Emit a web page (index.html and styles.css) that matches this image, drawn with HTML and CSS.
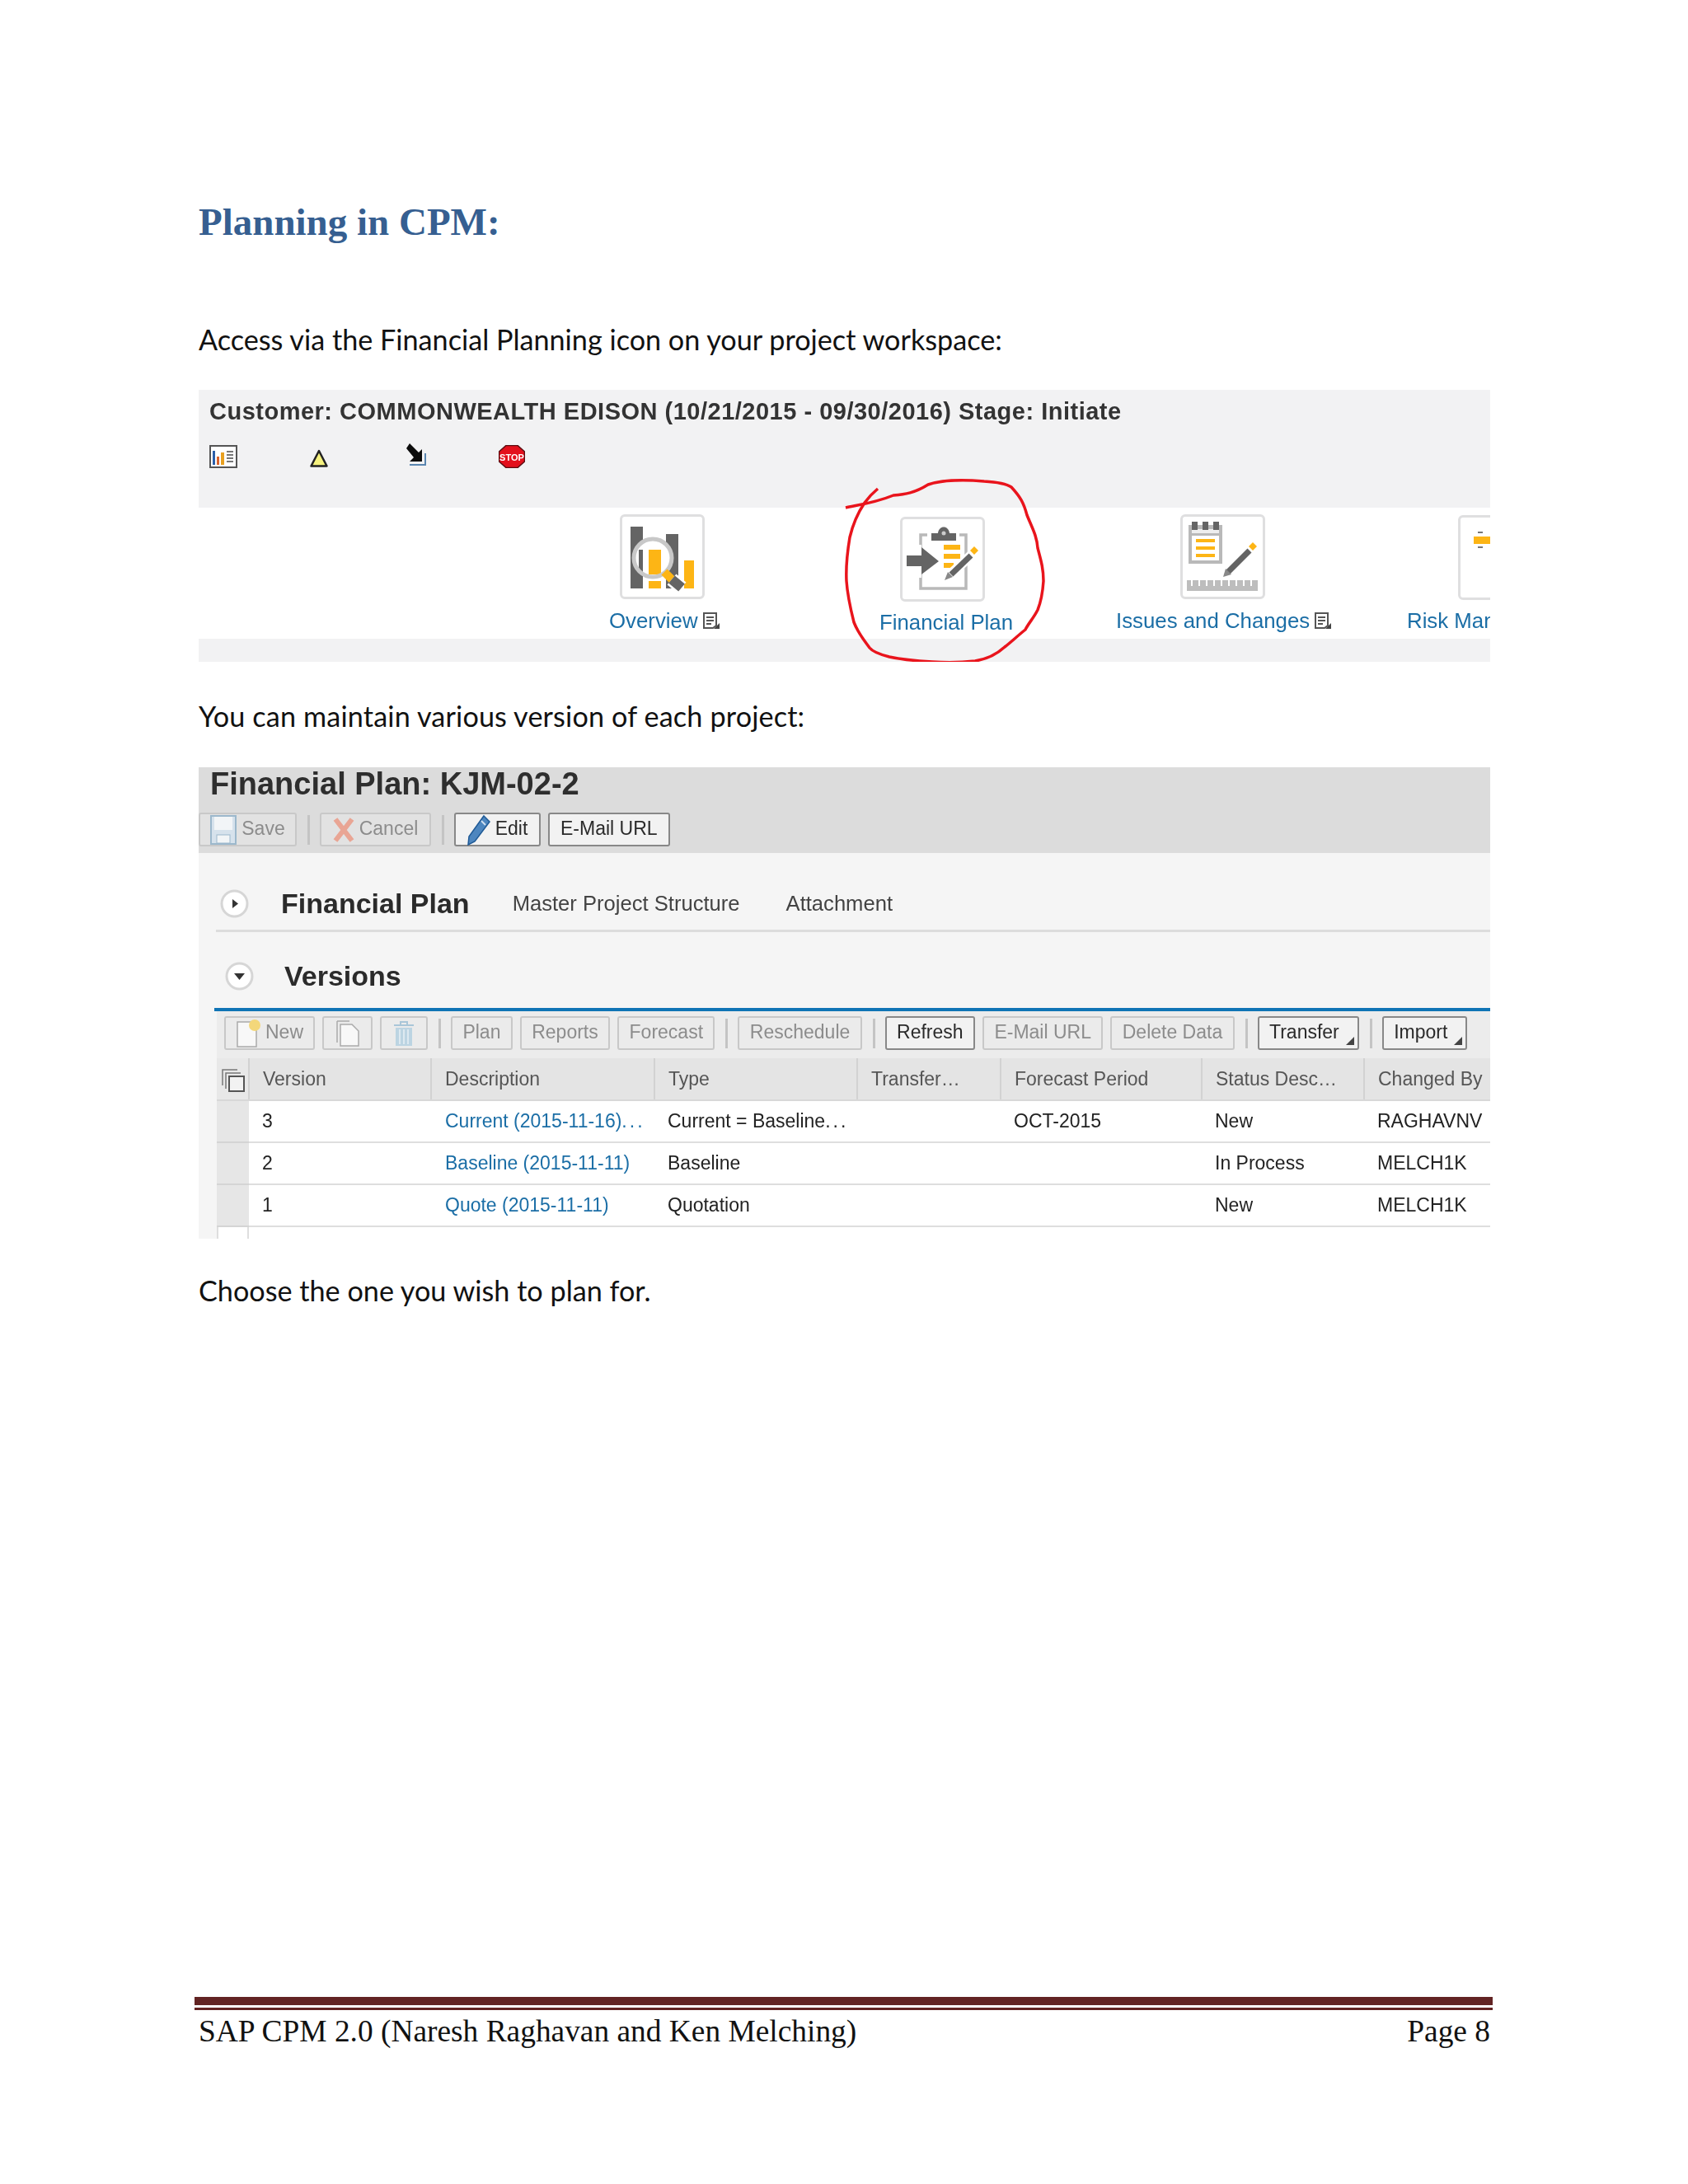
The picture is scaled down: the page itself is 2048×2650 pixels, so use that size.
FILE: index.html
```html
<!DOCTYPE html>
<html lang="en">
<head>
  <meta charset="UTF-8">
  <meta name="viewport" content="width=device-width, initial-scale=1.0">
  <title>Planning in CPM</title>
  <link rel="stylesheet" href="styles.css">
</head>
<body>
  <div class="page">
    <h1>Planning in CPM:</h1>
    <p class="access">Access via the Financial Planning icon on your project workspace:</p>

    <!-- Project workspace screenshot -->
    <div class="shot workspace">
      <div class="customer">
        <div class="customer-title">Customer: COMMONWEALTH EDISON (10/21/2015 - 09/30/2016) Stage: Initiate</div>
        <div class="status-icons">
          <svg class="status chart" width="34" height="28" viewBox="0 0 34 28">
            <rect x="1" y="1" width="32" height="26" fill="#fff" stroke="#555" stroke-width="2"/>
            <rect x="4" y="7" width="3" height="17" fill="#2b5ea8"/>
            <rect x="9" y="14" width="3" height="10" fill="#d9622b"/>
            <rect x="14" y="9" width="4" height="15" fill="#e8a020"/>
            <path d="M21 8h8M21 12h8M21 16h8M21 20h8" stroke="#777" stroke-width="2"/>
          </svg>
          <svg class="status triangle" width="22" height="22" viewBox="0 0 22 22">
            <path d="M11 2 L20.500 20.500 H1.500 Z" fill="#f6f27e" stroke="#222" stroke-width="2.500" stroke-linejoin="round"/>
          </svg>
          <svg class="status arrow" width="26" height="27" viewBox="0 0 26 27">
            <path d="M2 6 L6 0 L17 11 L21 7 L21 22 L6 22 L11 17 Z" fill="#0c0c0c"/>
            <path d="M6 26 H25 V12" fill="none" stroke="#5a86b0" stroke-width="2"/>
          </svg>
          <svg class="status stop" width="32" height="28" viewBox="0 0 32 28">
            <path d="M9 0.500 H23 L31.500 8 V20 L23 27.500 H9 L0.500 20 V8 Z" fill="#e3101c" stroke="#5a0d10" stroke-width="1.500"/>
            <text class="stop-text" x="16" y="18.500" text-anchor="middle">STOP</text>
          </svg>
        </div>
      </div>

      <div class="launchpad">
        <div class="launch launch-overview">
          <div class="tile">
            <svg width="97" height="97" viewBox="3 3 97 97">
              <rect x="13" y="15" width="15" height="75" fill="#646464"/>
              <rect x="56" y="24" width="15" height="66" fill="#646464"/>
              <rect x="35" y="43" width="15" height="47" fill="#fdb515"/>
              <rect x="78" y="56" width="12" height="34" fill="#fdb515"/>
              <circle cx="40" cy="53" r="23" fill="#fff"/>
              <rect x="23" y="43" width="5" height="30" fill="#646464"/>
              <rect x="35" y="43" width="15" height="30" fill="#fdb515"/>
              <rect x="30" y="76" width="26" height="5" fill="#fff"/>
              <circle cx="40" cy="53" r="23" fill="none" stroke="#c8c8c8" stroke-width="5"/>
              <path d="M54 70 L64 80" stroke="#fdb515" stroke-width="10"/>
              <path d="M63 79 L75 89" stroke="#fff" stroke-width="17"/>
              <path d="M63 79 L75 89" stroke="#646464" stroke-width="12"/>
            </svg>
          </div>
          <a class="launch-label">Overview<svg class="doc-icon" width="22" height="22" viewBox="0 0 22 22"><path d="M2 2 H17 V17 L13 20 H2 Z" fill="#fff" stroke="#555" stroke-width="2"/><path d="M5 7 H14 M5 11 H14 M5 15 H11" stroke="#555" stroke-width="2"/><path d="M21 14 V21 H14 Z" fill="#444"/></svg></a>
        </div>

        <div class="launch launch-plan">
          <div class="tile">
            <svg width="96" height="97" viewBox="3 3 96 97">
              <path d="M33 22 H25 V87 H80 V22 H72" fill="none" stroke="#b9b9b9" stroke-width="3.500"/>
              <path d="M38 29 V20 H46 C47 10 59 10 60 20 H68 V29 Z" fill="#646464"/>
              <circle cx="53" cy="20" r="2.500" fill="#ccc"/>
              <rect x="53" y="34" width="20" height="6" fill="#fdb515"/>
              <rect x="53" y="45" width="20" height="6" fill="#fdb515"/>
              <rect x="53" y="56" width="12" height="6" fill="#fdb515"/>
              <path d="M23 34 V74" stroke="#fff" stroke-width="6"/>
              <path d="M8 47 H26 V37 L47 54 L26 70 V60 H8 Z" fill="#646464"/>
              <path d="M60 71 L86 47" stroke="#fff" stroke-width="12"/>
              <path d="M62 70 L86 47" stroke="#646464" stroke-width="7"/>
              <path d="M54 77 L58 67 L64 73 Z" fill="#888"/>
              <path d="M90 36 L95 41 L90 46 L85 41 Z" fill="#fdb515"/>
            </svg>
          </div>
          <a class="launch-label">Financial Plan</a>
        </div>

        <div class="launch launch-issues">
          <div class="tile">
            <svg width="95" height="97" viewBox="3 3 95 97">
              <rect x="10" y="13" width="41" height="47" fill="#b9b9b9"/>
              <rect x="14" y="26" width="33" height="30" fill="#fff"/>
              <rect x="14" y="18" width="33" height="5" fill="#eee"/>
              <rect x="14" y="9" width="7" height="10" fill="#646464"/>
              <rect x="27" y="9" width="7" height="10" fill="#646464"/>
              <rect x="40" y="9" width="7" height="10" fill="#646464"/>
              <rect x="19" y="30" width="23" height="4" fill="#fdb515"/>
              <rect x="19" y="39" width="23" height="4" fill="#fdb515"/>
              <rect x="19" y="48" width="23" height="4" fill="#fdb515"/>
              <path d="M58 70 L84 44" stroke="#646464" stroke-width="7"/>
              <path d="M52 76 L55 66 L62 73 Z" fill="#888"/>
              <path d="M88 34 L93 39 L88 44 L83 39 Z" fill="#fdb515"/>
              <rect x="8" y="80" width="86" height="13" fill="#bdbdbd"/>
              <path d="M14 80 V87 M23 80 V87 M32 80 V87 M41 80 V87 M50 80 V87 M59 80 V87 M68 80 V87 M77 80 V87 M86 80 V87" stroke="#fff" stroke-width="2"/>
            </svg>
          </div>
          <a class="launch-label">Issues and Changes<svg class="doc-icon" width="22" height="22" viewBox="0 0 22 22"><path d="M2 2 H17 V17 L13 20 H2 Z" fill="#fff" stroke="#555" stroke-width="2"/><path d="M5 7 H14 M5 11 H14 M5 15 H11" stroke="#555" stroke-width="2"/><path d="M21 14 V21 H14 Z" fill="#444"/></svg></a>
        </div>

        <div class="launch launch-risk">
          <div class="tile">
            <svg width="97" height="97" viewBox="3 3 97 97">
              <rect x="19" y="26" width="60" height="9" fill="#fdb515"/>
              <path d="M24 21 H30 M24 39 H30" stroke="#777" stroke-width="2"/>
            </svg>
          </div>
          <a class="launch-label">Risk Man</a>
        </div>
      </div>
      <div class="band"></div>

      <svg class="scribble" width="300" height="240" viewBox="1000 570 300 240">
        <path d="M1026 616 C1039 613 1059 611 1084 601 C1098 600 1110 598 1126 588 C1143 582 1172 582 1194 584 C1211 585 1221 587 1227 591 C1238 603 1242 610 1246 625 C1252 640 1258 650 1259 665 C1263 680 1266 690 1266 705 C1265 720 1263 730 1259 740 C1254 750 1248 756 1244 764 C1234 772 1228 778 1219 785 C1208 795 1196 800 1183 802 C1165 804 1147 804 1131 803 C1113 802 1093 800 1079 797 C1067 794 1059 791 1055 786 C1047 775 1041 768 1036 755 C1031 735 1028 720 1027 705 C1026 685 1028 670 1031 652 C1035 635 1041 622 1049 610 C1054 603 1059 598 1065 593" fill="none" stroke="#e9141c" stroke-width="3.500"/>
      </svg>
    </div>

    <p class="maintain">You can maintain various version of each project:</p>

    <!-- Financial plan screenshot -->
    <div class="shot plan">
      <div class="plan-head">
        <div class="plan-title">Financial Plan: KJM-02-2</div>
        <div class="toolbar head-toolbar">
          <span class="btn off with-icon btn-save">
            <svg width="32" height="36" viewBox="0 0 32 36"><path d="M1 1 H31 V35 H1 Z" fill="#d6e2ec" stroke="#9cb8cc" stroke-width="2"/><rect x="5" y="2" width="22" height="16" fill="#f2f5f7"/><rect x="8" y="24" width="16" height="10" fill="#f2f5f7" stroke="#9cb8cc"/></svg>
            Save
          </span>
          <span class="sep"></span>
          <span class="btn off with-icon btn-cancel">
            <svg width="26" height="30" viewBox="0 0 26 30"><path d="M3 2 L23 28 M23 2 L3 28" stroke="#e9a594" stroke-width="6"/></svg>
            Cancel
          </span>
          <span class="sep"></span>
          <span class="btn with-icon btn-edit">
            <svg width="28" height="38" viewBox="0 0 28 38"><path d="M20 2 L27 9 L9 33 L1 37 L2 27 Z" fill="#4d86bf" stroke="#1f5a96" stroke-width="1.500"/><path d="M17 8 L22 13" stroke="#cfe0f0" stroke-width="2"/></svg>
            Edit
          </span>
          <span class="btn">E-Mail URL</span>
        </div>
      </div>

      <div class="tabs">
        <span class="toggle"><svg width="35" height="35" viewBox="0 0 35 35"><circle cx="17.500" cy="17.500" r="15.500" fill="#fff" stroke="#d6d6d6" stroke-width="3"/><path d="M15 12 L22 17.500 L15 23 Z" fill="#333"/></svg></span>
        <span class="tab-main">Financial Plan</span>
        <span class="tab tab-master">Master Project Structure</span>
        <span class="tab tab-attach">Attachment</span>
      </div>

      <div class="versions-head">
        <span class="toggle"><svg width="35" height="35" viewBox="0 0 35 35"><circle cx="17.500" cy="17.500" r="15.500" fill="#fff" stroke="#d6d6d6" stroke-width="3"/><path d="M11 14 H24 L17.500 22 Z" fill="#333"/></svg></span>
        <span class="versions-title">Versions</span>
      </div>

      <div class="versions">
        <div class="toolbar table-toolbar">
          <span class="btn off with-icon btn-new">
            <svg width="32" height="34" viewBox="0 0 32 34"><path d="M2 3 H20 L25 9 V33 H2 Z" fill="#f8f8f8" stroke="#aaa" stroke-width="1.500"/><circle cx="23" cy="7" r="7" fill="#f3d77a"/></svg>
            New
          </span>
          <span class="btn off icon-only copy-btn">
            <svg width="30" height="32" viewBox="0 0 30 32"><path d="M2 1 H17 M2 1 V27" fill="none" stroke="#aaa" stroke-width="1.500"/><path d="M6 5 H20 L28 13 V31 H6 Z" fill="#f8f8f8" stroke="#aaa" stroke-width="1.500"/></svg>
          </span>
          <span class="btn off icon-only trash-btn">
            <svg width="26" height="32" viewBox="0 0 26 32"><path d="M1 6 H25 M9 6 V2 H17 V6" fill="none" stroke="#a9c6d8" stroke-width="2"/><path d="M3 9 H23 V31 H3 Z" fill="#bcd4e2"/><path d="M8 11 V29 M13 11 V29 M18 11 V29" stroke="#e8f0f5" stroke-width="1.500"/></svg>
          </span>
          <span class="sep"></span>
          <span class="btn off">Plan</span>
          <span class="btn off">Reports</span>
          <span class="btn off">Forecast</span>
          <span class="sep"></span>
          <span class="btn off">Reschedule</span>
          <span class="sep"></span>
          <span class="btn">Refresh</span>
          <span class="btn off">E-Mail URL</span>
          <span class="btn off">Delete Data</span>
          <span class="sep"></span>
          <span class="btn menu">Transfer</span>
          <span class="sep"></span>
          <span class="btn menu">Import</span>
        </div>

        <table class="grid">
          <colgroup>
            <col class="col-sel"><col class="col-ver"><col class="col-desc"><col class="col-type"><col class="col-trans"><col class="col-period"><col class="col-status"><col class="col-by">
          </colgroup>
          <thead>
            <tr>
              <th class="sel"><svg class="select-all" width="28" height="28" viewBox="0 0 28 28"><path d="M1 20 V1 H19 M5 24 V5 H23" fill="none" stroke="#777" stroke-width="1.500"/><rect x="9" y="9" width="18" height="18" fill="#f2f2f2" stroke="#555" stroke-width="2"/></svg></th>
              <th>Version</th><th>Description</th><th>Type</th><th>Transfer…</th><th>Forecast Period</th><th>Status Desc…</th><th>Changed By</th>
            </tr>
          </thead>
          <tbody>
            <tr>
              <td class="sel"></td><td>3</td><td class="desc"><a>Current (2015-11-16)<span class="dots">...</span></a></td><td>Current = Baseline<span class="dots">...</span></td><td></td><td>OCT-2015</td><td>New</td><td>RAGHAVNV</td>
            </tr>
            <tr>
              <td class="sel"></td><td>2</td><td class="desc"><a>Baseline (2015-11-11)</a></td><td>Baseline</td><td></td><td></td><td>In Process</td><td>MELCH1K</td>
            </tr>
            <tr>
              <td class="sel"></td><td>1</td><td class="desc"><a>Quote (2015-11-11)</a></td><td>Quotation</td><td></td><td></td><td>New</td><td>MELCH1K</td>
            </tr>
          </tbody>
        </table>
        <div class="grid-end"><div class="grid-end-sel"></div></div>
      </div>
    </div>

    <p class="choose">Choose the one you wish to plan for.</p>

    <footer>
      <div class="rule"></div>
      <div class="foot-text">
        <span>SAP CPM 2.0 (Naresh Raghavan and Ken Melching)</span>
        <span>Page 8</span>
      </div>
    </footer>
  </div>
</body>
</html>
```

FILE: styles.css
```css
* {
  box-sizing: border-box;
}
body {
  margin: 0;
  background: #fff;
  color: #111;
  font-family: "Lato", "Open Sans", sans-serif;
}
.page {
  width: 2048px;
  height: 2650px;
  padding: 239px 240px 0 241px;
  display: flex;
  flex-direction: column;
  overflow: hidden;
}
h1 {
  margin: 0;
  font-family: "Liberation Serif", serif;
  font-size: 47px;
  line-height: 60px;
  font-weight: bold;
  color: #365f91;
}
p {
  margin: 0;
  font-size: 34.200px;
  line-height: 50px;
}
.access {
  margin-top: 88px;
  margin-bottom: 36px;
}
.maintain {
  margin-top: 41px;
  margin-bottom: 37px;
  letter-spacing: 0.14px;
}
.choose {
  margin-top: 38px;
}

/* screenshots pasted in the document */
.shot {
  position: relative;
  width: 1567px;
  font-family: "Liberation Sans", Arial, sans-serif;
  overflow: hidden;
  filter: blur(0.6px);
}
.workspace {
  height: 330px;
}
.customer {
  height: 143px;
  padding: 11px 0 0 13px;
  background: #f2f2f3;
}
.customer-title {
  font-size: 29px;
  line-height: 30px;
  letter-spacing: 0.5px;
  font-weight: bold;
  color: #333;
  white-space: nowrap;
}
.status-icons {
  display: flex;
  align-items: flex-start;
  margin-top: 26px;
}
.status.triangle {
  margin: 5px 0 0 88px;
}
.status.arrow {
  margin: -2px 0 0 93px;
}
.status.stop {
  margin-left: 88px;
}
.stop-text {
  font-size: 11px;
  font-weight: bold;
  fill: #fff;
}
.launchpad {
  display: flex;
  height: 159px;
  background: #fff;
}
.launch {
  display: flex;
  flex-direction: column;
  flex-shrink: 0;
}
.tile {
  width: 103px;
  height: 103px;
  border: 3px solid #dfdfe0;
  border-radius: 6px;
  background: #fff;
}
.tile svg {
  display: block;
}
.launch-label {
  display: flex;
  align-items: center;
  height: 30px;
  margin-top: 11px;
  font-size: 25.800px;
  color: #1b6ea6;
  white-space: nowrap;
}
.doc-icon {
  margin-left: 5px;
}
.launch-overview {
  width: 328px;
  margin: 8px 0 0 498px;
}
.launch-overview .tile {
  margin-left: 13px;
}
.launch-plan {
  width: 287px;
  margin-top: 11px;
}
.launch-plan .tile {
  margin-left: 25px;
}
.launch-plan .launch-label {
  margin-top: 10px;
}
.launch-issues {
  width: 353px;
  margin-top: 8px;
}
.launch-issues .tile {
  margin-left: 78px;
}
.launch-risk {
  margin-top: 9px;
}
.launch-risk .tile {
  margin-left: 62px;
}
.launch-risk .launch-label {
  margin-top: 10px;
}
.band {
  height: 28px;
  background: #f2f2f3;
}
.scribble {
  position: absolute;
  left: 759px;
  top: 97px;
}

/* financial plan */
.plan {
  height: 572px;
  background: #f5f5f5;
}
.plan-head {
  height: 104px;
  background: #dcdcdc;
}
.plan-title {
  height: 55px;
  padding: 0 0 0 14px;
  font-size: 38px;
  line-height: 41px;
  font-weight: bold;
  color: #2e2e2e;
  white-space: nowrap;
}
.toolbar {
  display: flex;
  align-items: center;
  height: 41px;
}
.btn {
  display: flex;
  align-items: center;
  justify-content: center;
  flex-shrink: 0;
  position: relative;
  height: 41px;
  padding: 0 12.400px 3px;
  margin-right: 9px;
  border: 2px solid #888;
  border-radius: 3px;
  background: #f2f2f2;
  font-size: 23px;
  color: #2a2a2a;
  white-space: nowrap;
}
.btn svg {
  flex-shrink: 0;
}
.btn.off {
  border-color: #c8c8c8;
  background: #ebebeb;
  color: #8c8c8c;
}
.sep {
  flex-shrink: 0;
  width: 3px;
  height: 36px;
  margin: 0 12px 0 4px;
  background: #c4c4c4;
}
.with-icon {
  gap: 6px;
  padding-left: 0;
  padding-right: 0;
}
.with-icon svg {
  margin-top: 3px;
}
.icon-only {
  padding: 0;
}
.head-toolbar .btn.off {
  background: #e2e2e2;
}
.head-toolbar .btn {
  padding-left: 13px;
  padding-right: 13px;
}
.head-toolbar .with-icon {
  padding-left: 0;
  padding-right: 0;
}
.btn-save {
  width: 119px;
}
.btn-cancel {
  width: 135px;
}
.btn-edit {
  width: 105px;
}
.menu {
  justify-content: flex-start;
  padding-right: 22px;
}
.menu::after {
  content: "";
  position: absolute;
  right: 4px;
  bottom: 4px;
  border-left: 10px solid transparent;
  border-bottom: 10px solid #444;
}
.tabs {
  display: flex;
  align-items: center;
  height: 96px;
  margin-left: 21px;
  padding: 44px 0 14px 5px;
  border-bottom: 3px solid #dcdcdc;
}
.toggle {
  display: block;
  width: 35px;
  height: 35px;
  flex-shrink: 0;
}
.toggle svg {
  display: block;
}
.tab-main {
  margin-left: 39px;
  font-size: 34px;
  font-weight: bold;
  color: #2b2b2b;
}
.tab {
  font-size: 25.600px;
  color: #444;
}
.tab-master {
  margin-left: 52px;
}
.tab-attach {
  margin-left: 56px;
}
.versions-head {
  display: flex;
  align-items: center;
  height: 35px;
  margin: 36px 0 0 32px;
}
.versions-title {
  margin-left: 37px;
  font-size: 34px;
  font-weight: bold;
  color: #2b2b2b;
}
.versions {
  margin: 21px 0 0 19px;
  border-top: 4px solid #0f74b5;
}
.table-toolbar {
  height: 57px;
  margin-left: 3px;
  padding: 6px 0 10px 9px;
  background: #ececec;
}
.copy-btn {
  width: 61px;
}
.trash-btn {
  width: 58px;
}
.btn-new {
  width: 110px;
}
.table-toolbar .with-icon {
  gap: 4px;
}
.grid {
  width: 1545px;
  margin-left: 3px;
  border-collapse: collapse;
  table-layout: fixed;
  background: #fff;
  font-size: 23px;
}
.col-sel { width: 39px; }
.col-ver { width: 221px; }
.col-desc { width: 271px; }
.col-type { width: 246px; }
.col-trans { width: 174px; }
.col-period { width: 244px; }
.col-status { width: 197px; }
.col-by { width: 153px; }
.grid th {
  height: 51px;
  padding: 0 0 0 16px;
  background: #e4e4e4;
  border-left: 2px solid #d2d2d2;
  border-bottom: 2px solid #d8d8d8;
  font-weight: normal;
  text-align: left;
  color: #555;
  white-space: nowrap;
}
.grid th.sel {
  padding: 0;
  border-left: 0;
  background: #e8e8e8;
}
.select-all {
  display: block;
  margin: 4px 0 0 6px;
}
.grid td {
  height: 51px;
  padding: 0 0 0 16px;
  border-bottom: 2px solid #dedede;
  color: #222;
  white-space: nowrap;
}
.grid td.desc {
  padding-left: 17px;
}
.grid td.sel {
  padding: 0;
  background: #e6e6e6;
  border-bottom: 2px solid #d4d4d4;
}
.grid a {
  color: #1b6ea6;
}
.dots {
  letter-spacing: 3px;
}
.grid-end {
  width: 1545px;
  height: 15px;
  margin-left: 3px;
  background: #fff;
}
.grid-end-sel {
  width: 39px;
  height: 15px;
  border-left: 2px solid #dedede;
  border-right: 2px solid #dedede;
}

/* page footer */
footer {
  margin: auto -3px 0 -5px;
  padding-bottom: 160px;
}
.rule {
  height: 16px;
  border-top: 10px solid #622423;
  border-bottom: 3px solid #622423;
}
.foot-text {
  display: flex;
  justify-content: space-between;
  padding: 1px 3px 0 5px;
  font-family: "Liberation Serif", serif;
  font-size: 37.400px;
  line-height: 50px;
  color: #111;
}
```
